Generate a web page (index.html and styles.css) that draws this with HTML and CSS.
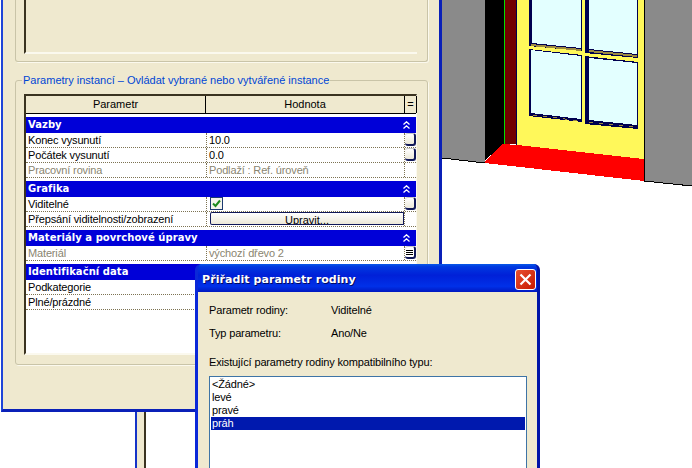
FILE: index.html
```html
<!DOCTYPE html>
<html lang="cs">
<head>
  <meta charset="UTF-8">
  <title>Přiřadit parametr rodiny</title>
  <link rel="stylesheet" href="styles.css">
</head>
<body>
  <svg class="scene" width="250" height="468" viewBox="442 0 250 468">
    <polygon points="442,0 485,0 485,163 442,158" fill="#8a8a8a"/>
    <polygon points="645,0 692,0 692,186 645,181" fill="#8a8a8a"/>
    <polygon points="485,0 504,0 504,144 485,160" fill="#000"/>
    <rect x="504" y="0" width="1" height="144" fill="#00e000"/>
    <rect x="505" y="0" width="11" height="144" fill="#730000"/>
    <rect x="516" y="0" width="1" height="145" fill="#000050"/>
    <polygon points="517,0 644,0 644,159 517,145" fill="#fff85a"/>
    <polygon points="485,161 503,144 517,145 644,159 644,181 485,163" fill="#f00"/>
    <path d="M442 158 L485 163 M644 181 L692 186" stroke="#000" fill="none"/>
    <path d="M644.500 0 V181" stroke="#000"/>

    <polygon points="529,0 582,0 582,51 529,46" fill="#000050"/>
    <polygon points="532,0 581,0 581,48 532,43" fill="#e3ffff"/>
    <polygon points="531,44 581,49 581,51 531,46" fill="#9c8a40"/>
    <polygon points="585,0 638,0 638,58 585,53" fill="#000050"/>
    <polygon points="589,0 637,0 637,54 589,49" fill="#e3ffff"/>
    <polygon points="589,50 637,55 637,57 589,52" fill="#9c8a40"/>

    <polygon points="529,49 582,55 582,122 529,116" fill="#000050"/>
    <polygon points="531,50 581,56 581,119 531,113" fill="#e3ffff"/>
    <path d="M533 115 L581 121" stroke="#9c8a40" stroke-dasharray="4 6" fill="none"/>
    <polygon points="585,56 638,62 638,129 585,124" fill="#000050"/>
    <polygon points="589,58 637,63 637,125 589,120" fill="#e3ffff"/>
    <path d="M589 122 L637 127" stroke="#9c8a40" stroke-dasharray="4 6" fill="none"/>
  </svg>

  <div class="stem"></div>

  <div class="main-win">
    <div class="group group-top">
      <div class="inset"></div>
    </div>

    <div class="group group-params">
      <span class="group-title">Parametry instancí – Ovládat vybrané nebo vytvářené instance</span>
      <div class="grid">
        <div class="grid-head">
          <div class="head-cell">Parametr</div>
          <div class="head-cell">Hodnota</div>
          <div class="head-cell head-eq">=</div>
        </div>

        <div class="section">Vazby<svg class="chev" width="7" height="8" viewBox="0 0 7 8"><path d="M0.500 3.500 3.500 0.800 6.500 3.500M0.500 7.500 3.500 4.800 6.500 7.500" fill="none" stroke="#fff" stroke-width="1.300"/></svg></div>
        <div class="row"><div class="cell">Konec vysunutí</div><div class="cell">10.0</div><div class="cell-side"><span class="mini-btn"></span></div></div>
        <div class="row"><div class="cell">Počátek vysunutí</div><div class="cell">0.0</div><div class="cell-side"><span class="mini-btn"></span></div></div>
        <div class="row off"><div class="cell">Pracovní rovina</div><div class="cell">Podlaží : Ref. úroveň</div><div class="cell-side"></div></div>

        <div class="section">Grafika<svg class="chev" width="7" height="8" viewBox="0 0 7 8"><path d="M0.500 3.500 3.500 0.800 6.500 3.500M0.500 7.500 3.500 4.800 6.500 7.500" fill="none" stroke="#fff" stroke-width="1.300"/></svg></div>
        <div class="row"><div class="cell">Viditelné</div><div class="cell"><span class="check"><svg width="11" height="11" viewBox="0 0 11 11"><path d="M2 5.500 4.500 8 9 2.500" fill="none" stroke="#1c8a1c" stroke-width="2"/></svg></span></div><div class="cell-side"><span class="mini-btn"></span></div></div>
        <div class="row"><div class="cell">Přepsání viditelnosti/zobrazení</div><div class="cell cell-btn"><span class="edit-btn">Upravit...</span></div><div class="cell-side"></div></div>

        <div class="section">Materiály a povrchové úpravy<svg class="chev" width="7" height="8" viewBox="0 0 7 8"><path d="M0.500 3.500 3.500 0.800 6.500 3.500M0.500 7.500 3.500 4.800 6.500 7.500" fill="none" stroke="#fff" stroke-width="1.300"/></svg></div>
        <div class="row off"><div class="cell">Materiál</div><div class="cell">výchozí dřevo 2</div><div class="cell-side"><span class="mini-btn mini-eq"></span></div></div>

        <div class="section">Identifikační data</div>
        <div class="row"><div class="cell">Podkategorie</div><div class="cell"></div><div class="cell-side"></div></div>
        <div class="row"><div class="cell">Plné/prázdné</div><div class="cell"></div><div class="cell-side"></div></div>
      </div>
    </div>
  </div>

  <div class="dialog">
    <div class="dialog-title">
      <span>Přiřadit parametr rodiny</span>
      <span class="close">
        <svg width="13" height="13" viewBox="0 0 13 13"><path d="M1.500 1.500 11.500 11.500M11.500 1.500 1.500 11.500" stroke="#fff" stroke-width="2.200"/></svg>
      </span>
    </div>
    <div class="dialog-body">
      <div class="info"><span class="info-key">Parametr rodiny:</span><span>Viditelné</span></div>
      <div class="info"><span class="info-key">Typ parametru:</span><span>Ano/Ne</span></div>
      <div class="list-label">Existující parametry rodiny kompatibilního typu:</div>
      <div class="listbox">
        <div class="item">&lt;Žádné&gt;</div>
        <div class="item">levé</div>
        <div class="item">pravé</div>
        <div class="item item-sel">práh</div>
      </div>
    </div>
  </div>
</body>
</html>
```

FILE: styles.css
```css
html, body {
  margin: 0;
  padding: 0;
}

body {
  width: 692px;
  height: 468px;
  position: relative;
  overflow: hidden;
  background: #fff;
  font-family: "Liberation Sans", Tahoma, sans-serif;
  font-size: 11px;
  color: #000;
}

.scene {
  position: absolute;
  left: 442px;
  top: 0;
  shape-rendering: crispEdges;
}

.stem {
  position: absolute;
  left: 135px;
  top: 412px;
  width: 7px;
  height: 56px;
  background: #efe9cf;
  border-left: 2px solid #1533c8;
  border-right: 2px solid #3a3320;
}

.main-win {
  position: absolute;
  left: 1px;
  top: -40px;
  box-sizing: border-box;
  width: 441px;
  height: 452px;
  padding: 0 11px 44px 12px;
  background: #efe9cf;
  border-left: 2px solid #1f45d8;
  border-right: 3px solid #0a20b8;
  border-bottom: 3px solid #0a20b8;
  display: flex;
  flex-direction: column;
  gap: 18px;
}

.group {
  border: 1px solid #c9c4a8;
  border-radius: 3px;
  box-shadow: 1px 1px 0 #fbf9ee;
  padding: 0 10px 0 8px;
}

.group-top {
  height: 101px;
  flex: none;
  border-top: 0;
}

.inset {
  height: 92px;
  border-left: 2px solid #3a3320;
  border-bottom: 2px solid #fbf9ee;
}

.group-params {
  position: relative;
  flex: 1;
  min-height: 0;
  padding: 13px 10px 9px 8px;
}

.group-title {
  position: absolute;
  left: 6px;
  top: -8px;
  padding: 0 1px;
  background: #efe9cf;
  color: #0046d5;
  line-height: 15px;
}

.grid {
  height: 100%;
  box-sizing: border-box;
  background: #fff;
  border-left: 2px solid #3a3320;
  border-top: 2px solid #3a3320;
  border-bottom: 2px solid #fbf9ee;
  border-right: 1px solid #fbf9ee;
}

.grid-head {
  display: flex;
  height: 18px;
  box-sizing: border-box;
  background: #efe9cf;
  border-bottom: 1px solid #000;
  margin-bottom: 3px;
}

.head-cell {
  flex: none;
  width: 179px;
  text-align: center;
  line-height: 17px;
  border-right: 1px solid #000;
}

.head-cell + .head-cell {
  width: 198px;
}

.head-cell.head-eq {
  width: 11px;
}

.section {
  display: flex;
  justify-content: space-between;
  align-items: center;
  height: 16px;
  padding: 0 6px 0 2px;
  background: #0000d8;
  color: #fff;
  font-family: "DejaVu Sans", Tahoma, sans-serif;
  font-weight: bold;
  font-size: 10px;
  letter-spacing: 0.05px;
  line-height: 16px;
}

.row {
  display: flex;
  height: 15px;
  box-sizing: border-box;
  border-bottom: 1px dotted #7d7352;
  line-height: 14px;
  letter-spacing: -0.15px;
}

.row + .section {
  margin-top: 3px;
}

.cell {
  flex: none;
  box-sizing: border-box;
  width: 180px;
  padding-left: 2px;
  white-space: nowrap;
  overflow: hidden;
}

.cell + .cell {
  width: 199px;
  padding-left: 2px;
  border-left: 1px dotted #7d7352;
  border-right: 1px dotted #7d7352;
}

.cell-side {
  flex: 1;
}

.off {
  color: #8a8570;
}

.mini-btn {
  display: block;
  box-sizing: border-box;
  width: 11px;
  height: 13px;
  background: linear-gradient(#fff, #ece8d8);
  border-top: 1px solid #c8c8c8;
  border-right: 2px solid #101858;
  border-bottom: 2px solid #101858;
  border-radius: 3px;
}

.mini-eq {
  background: #fff repeating-linear-gradient(#000 0 1px, #fff 1px 2px) center / 7px 5px no-repeat;
}

.check {
  display: inline-flex;
  align-items: center;
  justify-content: center;
  box-sizing: border-box;
  width: 13px;
  height: 13px;
  margin-left: 1px;
  background: #f4f4ec;
  border: 1px solid #1c3a70;
}

.cell-btn {
  padding: 0;
}

.edit-btn {
  display: block;
  box-sizing: border-box;
  width: 195px;
  height: 13px;
  margin-left: 1px;
  line-height: 14px;
  text-align: center;
  letter-spacing: 0;
  background: linear-gradient(#fff, #ece8d8);
  border: 1px solid #101858;
  border-right-width: 2px;
  border-radius: 2px;
  overflow: hidden;
}

.dialog {
  position: absolute;
  left: 195px;
  top: 264px;
  box-sizing: border-box;
  width: 345px;
  height: 204px;
  overflow: hidden;
  background: #0a20d0;
  border-left: 3px solid #0a28d8;
  border-right: 3px solid #0014a8;
  border-radius: 6px 6px 0 0;
}

.dialog-title {
  display: flex;
  justify-content: space-between;
  align-items: center;
  box-sizing: border-box;
  height: 28px;
  padding: 3px 1px 0 4px;
  background: linear-gradient(#0858e8, #0038e0 10%, #0020d8 40%, #0030e8 80%, #0018c0);
  color: #fff;
  font-family: "DejaVu Sans", Tahoma, sans-serif;
  font-weight: bold;
  font-size: 11px;
  letter-spacing: 0.07px;
  text-shadow: 1px 1px 0 #000a60;
}

.close {
  display: flex;
  align-items: center;
  justify-content: center;
  margin-top: -1px;
  width: 19px;
  height: 19px;
  background: linear-gradient(135deg, #e85030, #c81800);
  border: 1px solid #fff;
  border-radius: 3px;
}

.dialog-body {
  display: flex;
  flex-direction: column;
  box-sizing: border-box;
  height: 176px;
  padding: 12px 10px 0 11px;
  background: #efe9cf;
  letter-spacing: -0.15px;
}

.info {
  display: flex;
  flex: none;
  height: 13px;
  line-height: 13px;
  margin-bottom: 10px;
}

.info-key {
  width: 122px;
}

.list-label {
  flex: none;
  height: 13px;
  margin-top: 6px;
  margin-bottom: 7px;
  line-height: 13px;
}

.listbox {
  flex: 1;
  padding: 1px;
  background: #fff;
  border: 1px solid #3e74a6;
  border-bottom: 0;
}

.item {
  height: 13px;
  padding-left: 1px;
  line-height: 13px;
}

.item-sel {
  background: #0019ae;
  color: #fff;
}
```
